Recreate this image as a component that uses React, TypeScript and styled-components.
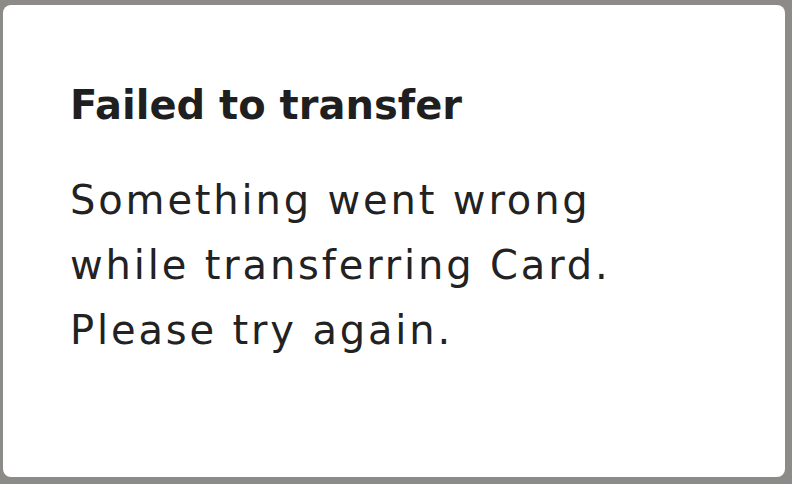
import * as React from 'react';
import styled, { createGlobalStyle } from 'styled-components';

const GlobalStyle = createGlobalStyle`
  html, body {
    margin: 0;
    padding: 0;
    background: #8c8b87;
  }
  body {
    font-family: 'DejaVu Sans', 'Liberation Sans', sans-serif;
  }
`;

const Backdrop = styled.div`
  width: 792px;
  height: 484px;
  box-sizing: border-box;
  padding: 5px 7px 7px 3px;
  display: flex;
`;

const Dialog = styled.div`
  flex: 1;
  background: #ffffff;
  border-radius: 8px;
  padding: 78px 40px 0 67px;
  display: flex;
  flex-direction: column;
  gap: 41px;
`;

const Title = styled.h2`
  margin: 0;
  font-size: 40px;
  font-weight: 700;
  line-height: 44px;
  color: #1f1f1f;
`;

const Message = styled.p`
  margin: 0;
  font-size: 40px;
  font-weight: 400;
  letter-spacing: 2.85px;
  line-height: 65px;
  color: #222222;
`;

const App = () => {
  return (
    <>
      <GlobalStyle />
      <Backdrop>
        <Dialog>
          <Title>Failed to transfer</Title>
          <Message>
            Something went wrong
            <br />
            while transferring Card.
            <br />
            Please try again.
          </Message>
        </Dialog>
      </Backdrop>
    </>
  );
};

export default App;
